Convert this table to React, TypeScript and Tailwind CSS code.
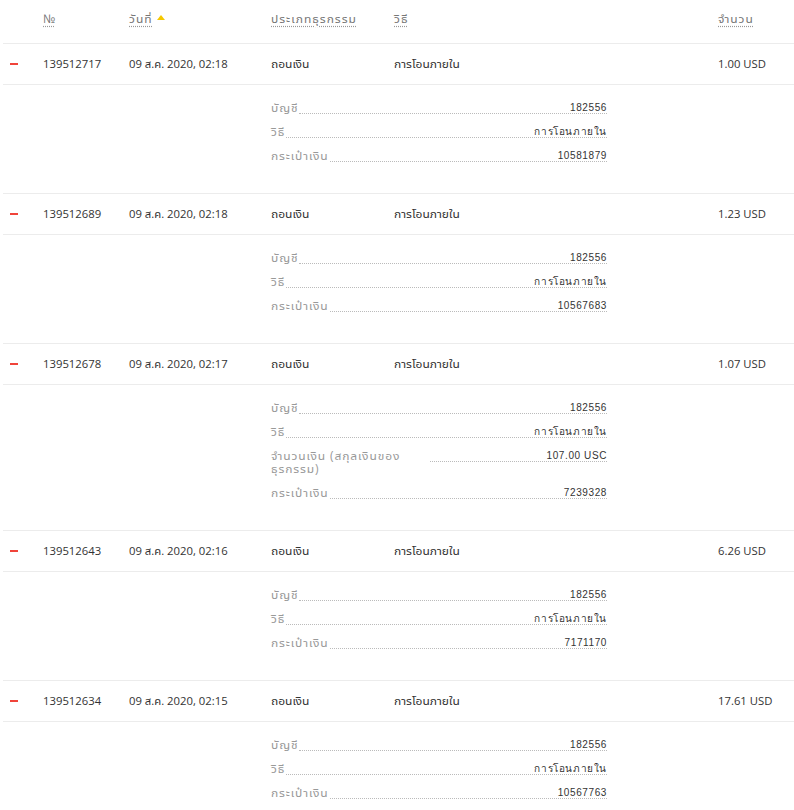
import React from 'react';

interface Detail {
  label: string;
  value: string;
}

interface Txn {
  id: string;
  date: string;
  type: string;
  method: string;
  amount: string;
  details: Detail[];
}

const txns: Txn[] = [
  {
    id: '139512717',
    date: '09 ส.ค. 2020, 02:18',
    type: 'ถอนเงิน',
    method: 'การโอนภายใน',
    amount: '1.00 USD',
    details: [
      { label: 'บัญชี', value: '182556' },
      { label: 'วิธี', value: 'การโอนภายใน' },
      { label: 'กระเป๋าเงิน', value: '10581879' },
    ],
  },
  {
    id: '139512689',
    date: '09 ส.ค. 2020, 02:18',
    type: 'ถอนเงิน',
    method: 'การโอนภายใน',
    amount: '1.23 USD',
    details: [
      { label: 'บัญชี', value: '182556' },
      { label: 'วิธี', value: 'การโอนภายใน' },
      { label: 'กระเป๋าเงิน', value: '10567683' },
    ],
  },
  {
    id: '139512678',
    date: '09 ส.ค. 2020, 02:17',
    type: 'ถอนเงิน',
    method: 'การโอนภายใน',
    amount: '1.07 USD',
    details: [
      { label: 'บัญชี', value: '182556' },
      { label: 'วิธี', value: 'การโอนภายใน' },
      { label: 'จำนวนเงิน (สกุลเงินของธุรกรรม)', value: '107.00 USC' },
      { label: 'กระเป๋าเงิน', value: '7239328' },
    ],
  },
  {
    id: '139512643',
    date: '09 ส.ค. 2020, 02:16',
    type: 'ถอนเงิน',
    method: 'การโอนภายใน',
    amount: '6.26 USD',
    details: [
      { label: 'บัญชี', value: '182556' },
      { label: 'วิธี', value: 'การโอนภายใน' },
      { label: 'กระเป๋าเงิน', value: '7171170' },
    ],
  },
  {
    id: '139512634',
    date: '09 ส.ค. 2020, 02:15',
    type: 'ถอนเงิน',
    method: 'การโอนภายใน',
    amount: '17.61 USD',
    details: [
      { label: 'บัญชี', value: '182556' },
      { label: 'วิธี', value: 'การโอนภายใน' },
      { label: 'กระเป๋าเงิน', value: '10567763' },
    ],
  },
];

// shared column template for header and rows
const cols = 'grid grid-cols-[40px_86px_142px_123px_324px_1fr] items-center';

function Sortable({ children }: { children: React.ReactNode }) {
  return <span className="underline decoration-dotted decoration-[#999] underline-offset-[3px]">{children}</span>;
}

export default function App() {
  return (
    <div
      className="w-[794px] bg-white pl-[3px] text-[11.3px] text-[#333]"
      style={{ fontFamily: '"Segoe UI", "Open Sans", "Noto Sans Thai UI", "Noto Sans Thai", "Noto Sans", sans-serif' }}
    >
      {/* header */}
      <div className={`${cols} h-[44px] border-b border-[#ececec] pb-[6px] text-[12px] tracking-[1px] text-[#777]`}>
        <div />
        <div className="tracking-normal">
          <Sortable>№</Sortable>
        </div>
        <div className="flex items-center">
          <Sortable>วันที่</Sortable>
          <span className="ml-[4px] mb-[3px] h-0 w-0 border-x-[4px] border-b-[5px] border-x-transparent border-b-[#f5c800]" />
        </div>
        <div>
          <Sortable>ประเภทธุรกรรม</Sortable>
        </div>
        <div>
          <Sortable>วิธี</Sortable>
        </div>
        <div className="text-left">
          <Sortable>จำนวน</Sortable>
        </div>
      </div>

      {txns.map((t) => (
        <div key={t.id}>
          <div className={`${cols} h-[41px] border-b border-[#ececec]`}>
            <div className="pl-[7px]">
              <div className="h-[2px] w-[8px] bg-[#f0443a]" />
            </div>
            <div>{t.id}</div>
            <div>{t.date}</div>
            <div className="text-[12px]">{t.type}</div>
            <div className="text-[12px]">{t.method}</div>
            <div>{t.amount}</div>
          </div>

          <div className="border-b border-[#ececec] pb-[26px] pt-[10px] pl-[268px]">
            <div className="w-[336px]">
              {t.details.map((d) => (
                <div key={d.label} className="flex items-start py-[5.5px] leading-[13px]">
                  <div className="max-w-[158px] shrink-0 text-[12px] tracking-[0.9px] text-[#999]">{d.label}</div>
                  <div className="ml-[1px] flex h-[13px] flex-1 justify-end border-b border-dotted border-[#bbb]">
                    <span
                      className="text-[10px] tracking-[0.6px] text-[#333]"
                      style={{ fontFamily: '"Liberation Sans", "DejaVu Sans", sans-serif' }}
                    >
                      {d.value}
                    </span>
                  </div>
                </div>
              ))}
            </div>
          </div>
        </div>
      ))}
    </div>
  );
}
